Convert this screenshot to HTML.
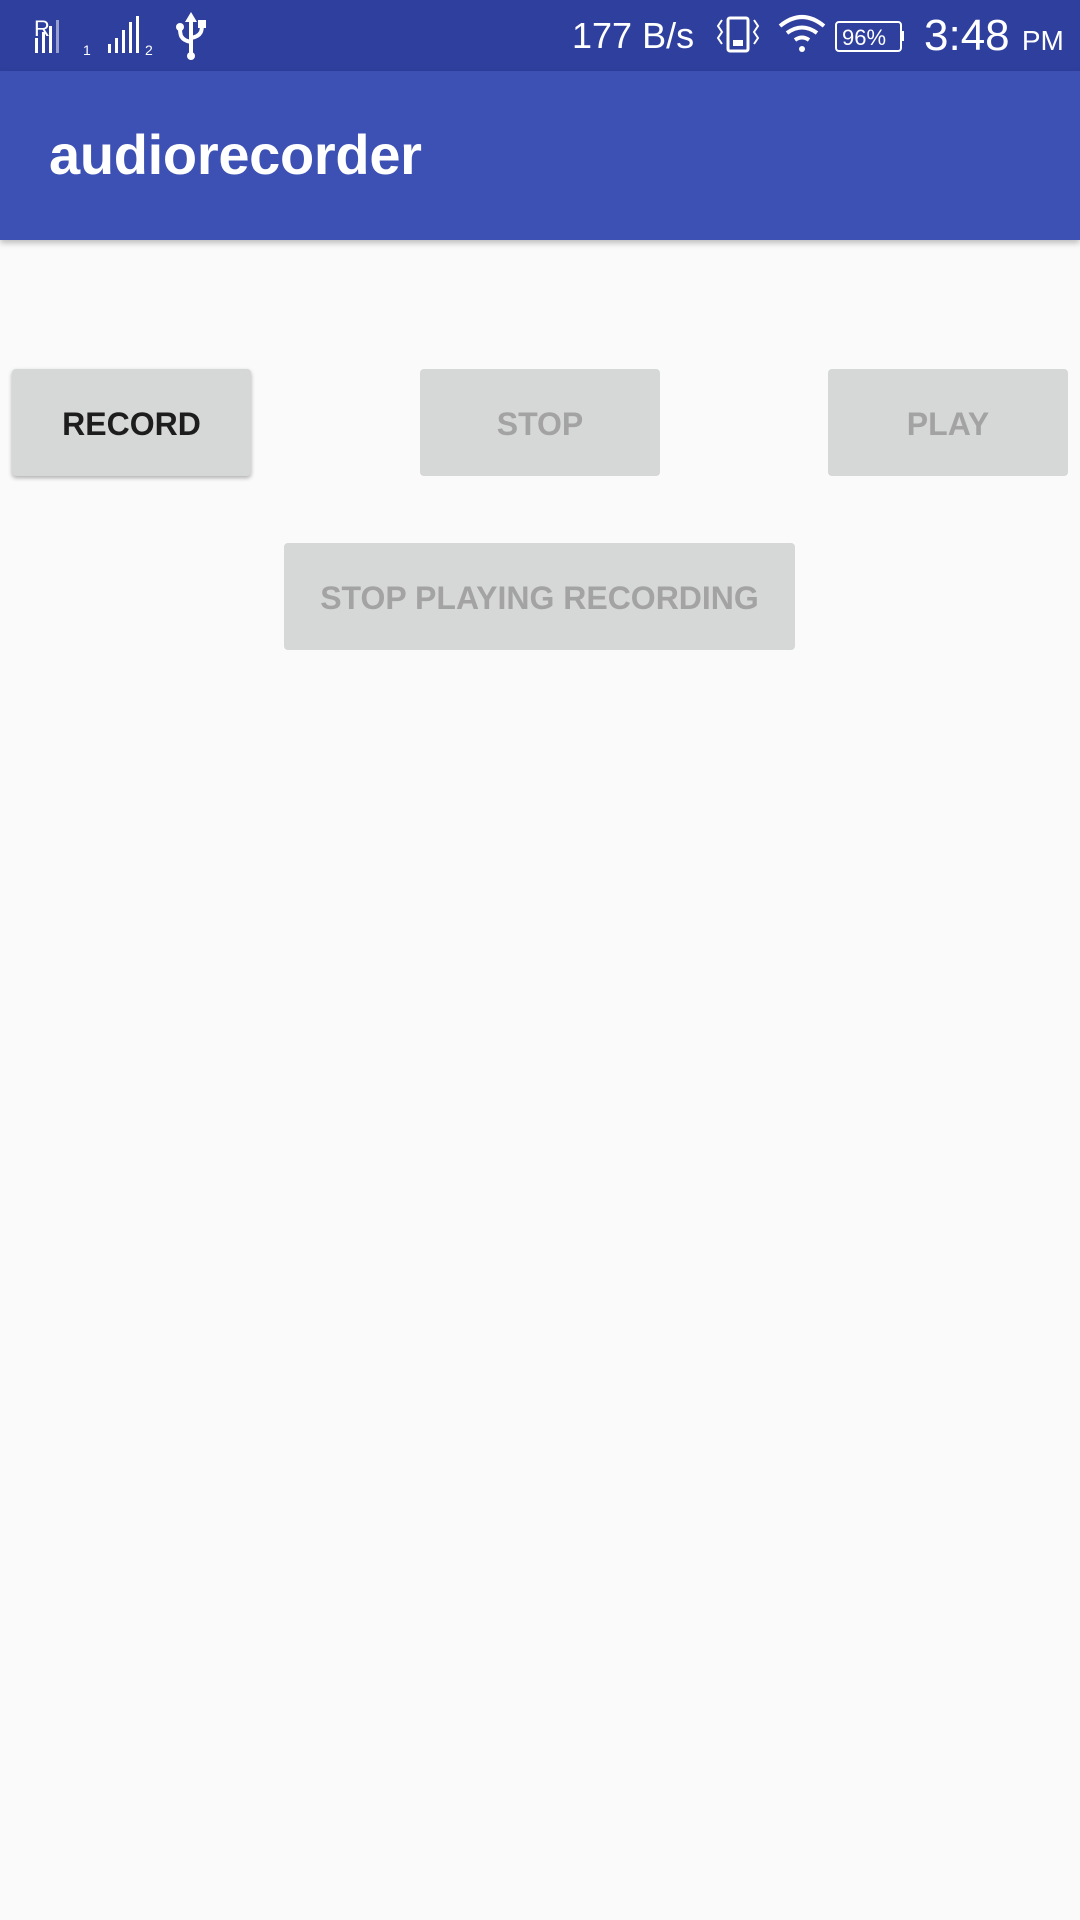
<!DOCTYPE html>
<html><head><meta charset="utf-8"><style>
html,body{margin:0;padding:0;width:1080px;height:1920px;background:#fafafa;font-family:"Liberation Sans",sans-serif;overflow:hidden;position:relative}
.sb{position:absolute;left:0;top:0;width:1080px;height:71px;background:#2e3f9e;color:#fff}
.ab{position:absolute;left:0;top:71px;width:1080px;height:169px;background:#3d51b4;box-shadow:0 3px 6px rgba(0,0,0,.25)}
.ab span{position:absolute;left:49px;top:51px;font-size:56px;color:#fff;font-weight:bold;letter-spacing:-0.3px}
.btn{position:absolute;background:#d6d7d7;border-radius:4px;font-weight:bold;font-size:32px;display:flex;align-items:center;justify-content:center;color:#a3a3a3;padding-top:3px;box-sizing:border-box}
.t{position:absolute;color:#fff;white-space:nowrap}
</style></head><body>
<div class="sb">
<svg width="1080" height="71" style="position:absolute;left:0;top:0" fill="#fff" stroke="#fff">
<text x="34" y="36" font-size="22" stroke="none" font-family="Liberation Sans">R</text>
<rect x="35" y="38" width="3" height="15" stroke="none"/><rect x="42" y="32" width="3" height="21" stroke="none"/><rect x="49" y="26" width="3" height="27" stroke="none"/><rect x="56" y="20" width="3" height="33" stroke="none" opacity=".5"/>
<text x="83" y="55" font-size="14" stroke="none">1</text>
<rect x="108" y="44" width="3" height="9" stroke="none"/><rect x="115" y="38" width="3" height="15" stroke="none"/><rect x="122" y="30" width="3" height="23" stroke="none"/><rect x="129" y="22" width="3" height="31" stroke="none"/><rect x="136" y="16" width="3" height="37" stroke="none"/>
<text x="145" y="55" font-size="14" stroke="none">2</text>
<path d="M191 20 L191 55 M191 42 C180 40 180 34 180 28 M191 38 C202 36 202 30 202 24" fill="none" stroke-width="4"/>
<path d="M185 22 L191 12 L197 22 Z" stroke="none"/><circle cx="191" cy="56" r="4" stroke="none"/><circle cx="180" cy="27" r="4" stroke="none"/><rect x="198" y="20" width="8" height="8" stroke="none"/>
<rect x="728" y="18" width="20" height="33" rx="2" fill="none" stroke-width="3"/><rect x="733" y="40" width="10" height="6" stroke="none"/>
<path d="M722 20 l-4 6 4 6 -4 6 4 6 M754 20 l4 6 -4 6 4 6 -4 6" fill="none" stroke-width="2"/>
<path d="M780 26 Q802 8 824 26" fill="none" stroke-width="4"/><path d="M787 33 Q802 22 817 33" fill="none" stroke-width="4"/><path d="M795 40 Q802 35 809 40" fill="none" stroke-width="4"/><circle cx="802" cy="49" r="3" stroke="none"/>
<rect x="836" y="22" width="65" height="29" rx="3" fill="none" stroke-width="2"/><rect x="902" y="31" width="2" height="10" stroke="none"/>
<text x="842" y="45" font-size="22" stroke="none" font-family="Liberation Sans">96%</text>
</svg>
<div class="t" style="left:572px;top:15px;font-size:36px">177 B/s</div>
<div class="t" style="left:924px;top:11px;font-size:44px">3:48 <span style="font-size:28px">PM</span></div>
</div>
<div class="ab"><span>audiorecorder</span></div>
<div class="btn" style="left:12px;top:369px;width:239px;height:107px;color:#1d1d1d;box-shadow:0 2px 4px rgba(0,0,0,.3)">RECORD</div>
<div class="btn" style="left:420px;top:369px;width:240px;height:107px">STOP</div>
<div class="btn" style="left:828px;top:369px;width:240px;height:107px">PLAY</div>
<div class="btn" style="left:284px;top:543px;width:511px;height:107px">STOP PLAYING RECORDING</div>
</body></html>
